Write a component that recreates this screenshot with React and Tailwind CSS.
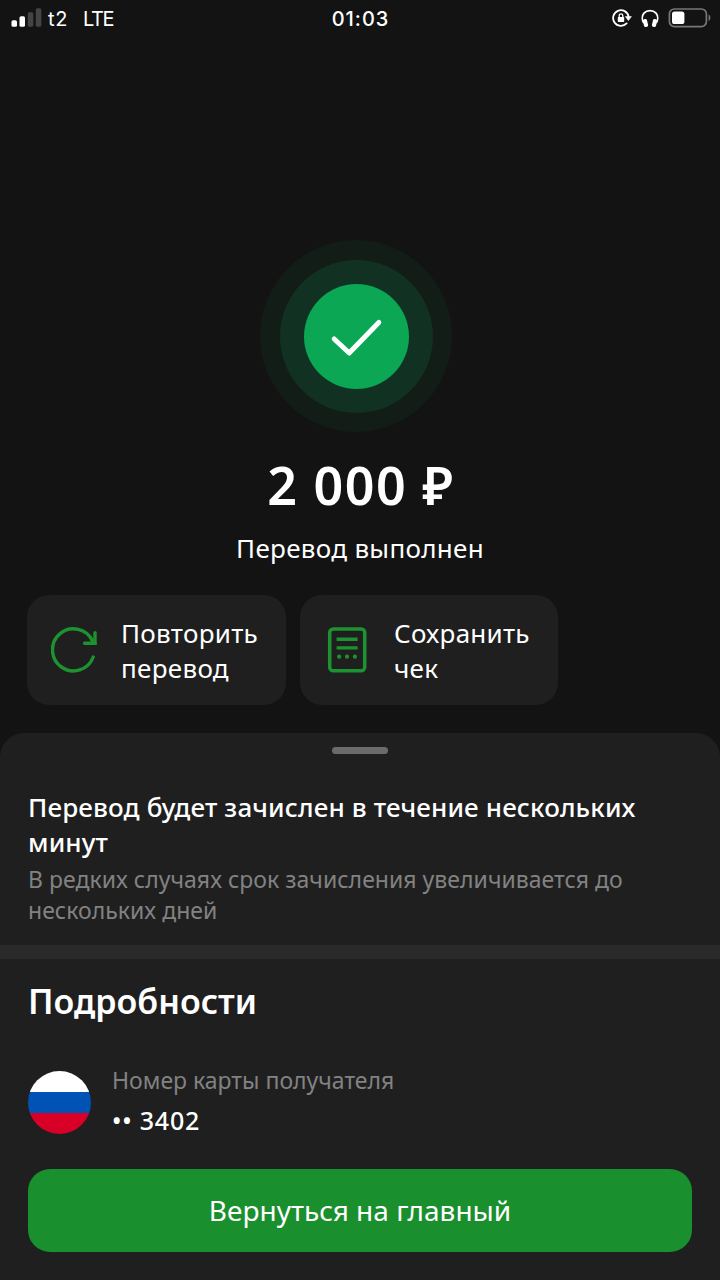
import React from 'react';

const SignalBars = () => (
    <svg width="31" height="20" viewBox="0 0 31 20">
        <rect x="0.5" y="12.2" width="5.5" height="6.6" rx="1.6" fill="#fff" />
        <rect x="8.5" y="8.2" width="5.5" height="10.6" rx="1.6" fill="#fff" />
        <rect x="16.8" y="4.2" width="5.5" height="14.6" rx="1.6" fill="#444" />
        <rect x="24.8" y="0.2" width="5.5" height="18.6" rx="1.6" fill="#444" />
    </svg>
);

const RotationLock = () => (
    <svg width="20" height="18" viewBox="0 0 20 18" fill="none">
        <path d="M16.6 7.5A7.8 7.8 0 1 0 14.6 14.4" stroke="#fff" strokeWidth="1.8" strokeLinecap="round" />
        <path d="M13.4 7.6H19.4L16.4 11.6Z" fill="#fff" stroke="#fff" strokeWidth="0.6" strokeLinejoin="round" />
        <rect x="5.8" y="8" width="6.4" height="5" rx="0.8" fill="#fff" />
        <path d="M7.2 8.4V6.6a1.8 1.8 0 0 1 3.6 0V8.4" stroke="#fff" strokeWidth="1.3" />
    </svg>
);

const Headphones = () => (
    <svg width="18" height="19" viewBox="0 0 18 19" fill="none">
        <path d="M2.8 14C0.9 11 0.8 6.8 3 4.2C6 0.8 12 0.8 15 4.2C17.2 6.8 17.1 11 15.2 14" stroke="#fff" strokeWidth="1.8" />
        <rect x="2.4" y="10" width="4.2" height="8" rx="1.8" fill="#fff" transform="rotate(-14 4.5 14)" />
        <rect x="11.4" y="10" width="4.2" height="8" rx="1.8" fill="#fff" transform="rotate(14 13.5 14)" />
    </svg>
);

const Battery = () => (
    <svg width="43" height="20" viewBox="0 0 43 20" fill="none">
        <rect x="1.4" y="1" width="37" height="17.6" rx="5" stroke="#777" strokeWidth="1.7" />
        <rect x="4" y="3.6" width="12.4" height="12.4" rx="2.6" fill="#fff" />
        <path d="M40.6 6.6c2.4 1 2.4 5.4 0 6.4Z" fill="#777" />
    </svg>
);

const SuccessBadge = () => (
    <div className="flex size-48 items-center justify-center rounded-full bg-[#121d17]">
        <div className="flex size-[153px] items-center justify-center rounded-full bg-[#113222]">
            <div className="flex size-[105px] items-center justify-center rounded-full bg-[#0ba754]">
                <svg width="105" height="105" viewBox="0 0 105 105" fill="none">
                    <path d="M30.2 55L45.2 69L74.8 38.4" stroke="#fff" strokeWidth="5" strokeLinecap="round" strokeLinejoin="round" />
                </svg>
            </div>
        </div>
    </div>
);

const RepeatIcon = () => (
    <svg width="48" height="48" viewBox="0 0 48 48" fill="none" stroke="#1c9330" strokeWidth="3.4" strokeLinecap="round">
        <path d="M42.2 31A21 21 0 1 1 41.6 15.2L44 17.3" />
        <path d="M44 6.6V17.3H33.6" />
    </svg>
);

const ReceiptIcon = () => (
    <svg width="40" height="48" viewBox="0 0 40 48" fill="none">
        <rect x="2.7" y="3" width="35" height="41.8" rx="3.6" stroke="#1c9330" strokeWidth="3.5" />
        <path d="M9.6 13.3H30.6M9.6 21.9H30.6" stroke="#1c9330" strokeWidth="3.4" />
        <g fill="#1c9330">
            <circle cx="12.2" cy="30.7" r="2.1" />
            <circle cx="20" cy="30.7" r="2.1" />
            <circle cx="27.9" cy="30.7" r="2.1" />
        </g>
    </svg>
);

const RussianFlag = () => (
    <div className="flex size-[63px] flex-col overflow-hidden rounded-full">
        <div className="flex-1 bg-white"></div>
        <div className="flex-1 bg-[#0052b4]"></div>
        <div className="flex-1 bg-[#d80027]"></div>
    </div>
);

export default function App() {
    return (
        <div className="flex h-[1280px] w-[720px] flex-col overflow-hidden bg-[#131313] font-['Noto_Sans',sans-serif] text-white">
            <header className="grid h-9 grid-cols-3 items-center pr-[9px] pl-[11px] font-['Inter',sans-serif] text-xl">
                <div className="flex items-center">
                    <SignalBars />
                    <span className="ml-1.5 pt-0.5 tracking-[0.6px]">t2</span>
                    <span className="ml-[15px] pt-0.5 tracking-[-1.4px]">LTE</span>
                </div>
                <div className="pt-0.5 pr-px text-center font-medium tracking-[1px]">01:03</div>
                <div className="flex items-center justify-end">
                    <RotationLock />
                    <span className="ml-[9px]"><Headphones /></span>
                    <span className="ml-[9px]"><Battery /></span>
                </div>
            </header>

            <main className="flex flex-1 flex-col">
                <section className="flex flex-col items-center pt-[204px]">
                    <div className="mr-2">
                        <SuccessBadge />
                    </div>
                    <h1 className="mt-[18px] pl-0.5 text-[52px] leading-[70px] font-semibold tracking-[1.5px]">2 000 ₽</h1>
                    <p className="mt-2.5 text-[26px] leading-9 tracking-[0.3px]">Перевод выполнен</p>
                </section>

                <section className="mt-[29px] flex gap-3.5 pl-[27px]">
                    <button className="flex h-[110px] w-[259px] items-center rounded-[22px] bg-[#1f1f1f] pl-6 text-left">
                        <RepeatIcon />
                        <span className="ml-[22px] pt-0.5 text-[26px] leading-[35px] tracking-[0.3px]">Повторить<br />перевод</span>
                    </button>
                    <button className="flex h-[110px] w-[258px] items-center rounded-[22px] bg-[#1f1f1f] pl-[27px] text-left">
                        <ReceiptIcon />
                        <span className="ml-[27px] pt-0.5 text-[26px] leading-[35px] tracking-[0.25px]">Сохранить<br />чек</span>
                    </button>
                </section>

                <section className="mt-7 flex flex-1 flex-col rounded-t-[24px] bg-[#1f1f1f]">
                    <div className="mt-3.5 h-[7px] w-14 self-center rounded-full bg-[#6b6b6b]"></div>
                    <div className="mt-9 h-[155px] px-7">
                        <h2 className="text-[26px] leading-[35px] font-medium tracking-[0.14px] whitespace-nowrap">Перевод будет зачислен в течение нескольких<br />минут</h2>
                        <p className="mt-1 text-[23px] leading-[31px] tracking-[0.03px] whitespace-nowrap text-[#828282]">В редких случаях срок зачисления увеличивается до<br />нескольких дней</p>
                    </div>
                    <div className="h-3.5 bg-[#2a2a2a]"></div>
                    <h2 className="mt-[18px] pl-7 text-[34px] leading-[48px] font-semibold">Подробности</h2>
                    <div className="mt-[39px] flex items-center pl-7">
                        <div className="pt-[5px]"><RussianFlag /></div>
                        <div className="ml-[21px]">
                            <p className="text-[23px] leading-8 text-[#828282]">Номер карты получателя</p>
                            <p className="mt-2 text-[25px] leading-8 font-medium tracking-[0.8px]">•• 3402</p>
                        </div>
                    </div>
                    <button className="mx-7 mt-[33px] h-[83px] rounded-[22px] bg-[#1a8f2d] pb-0.5 text-[28px]">Вернуться на главный</button>
                </section>
            </main>
        </div>
    );
}
